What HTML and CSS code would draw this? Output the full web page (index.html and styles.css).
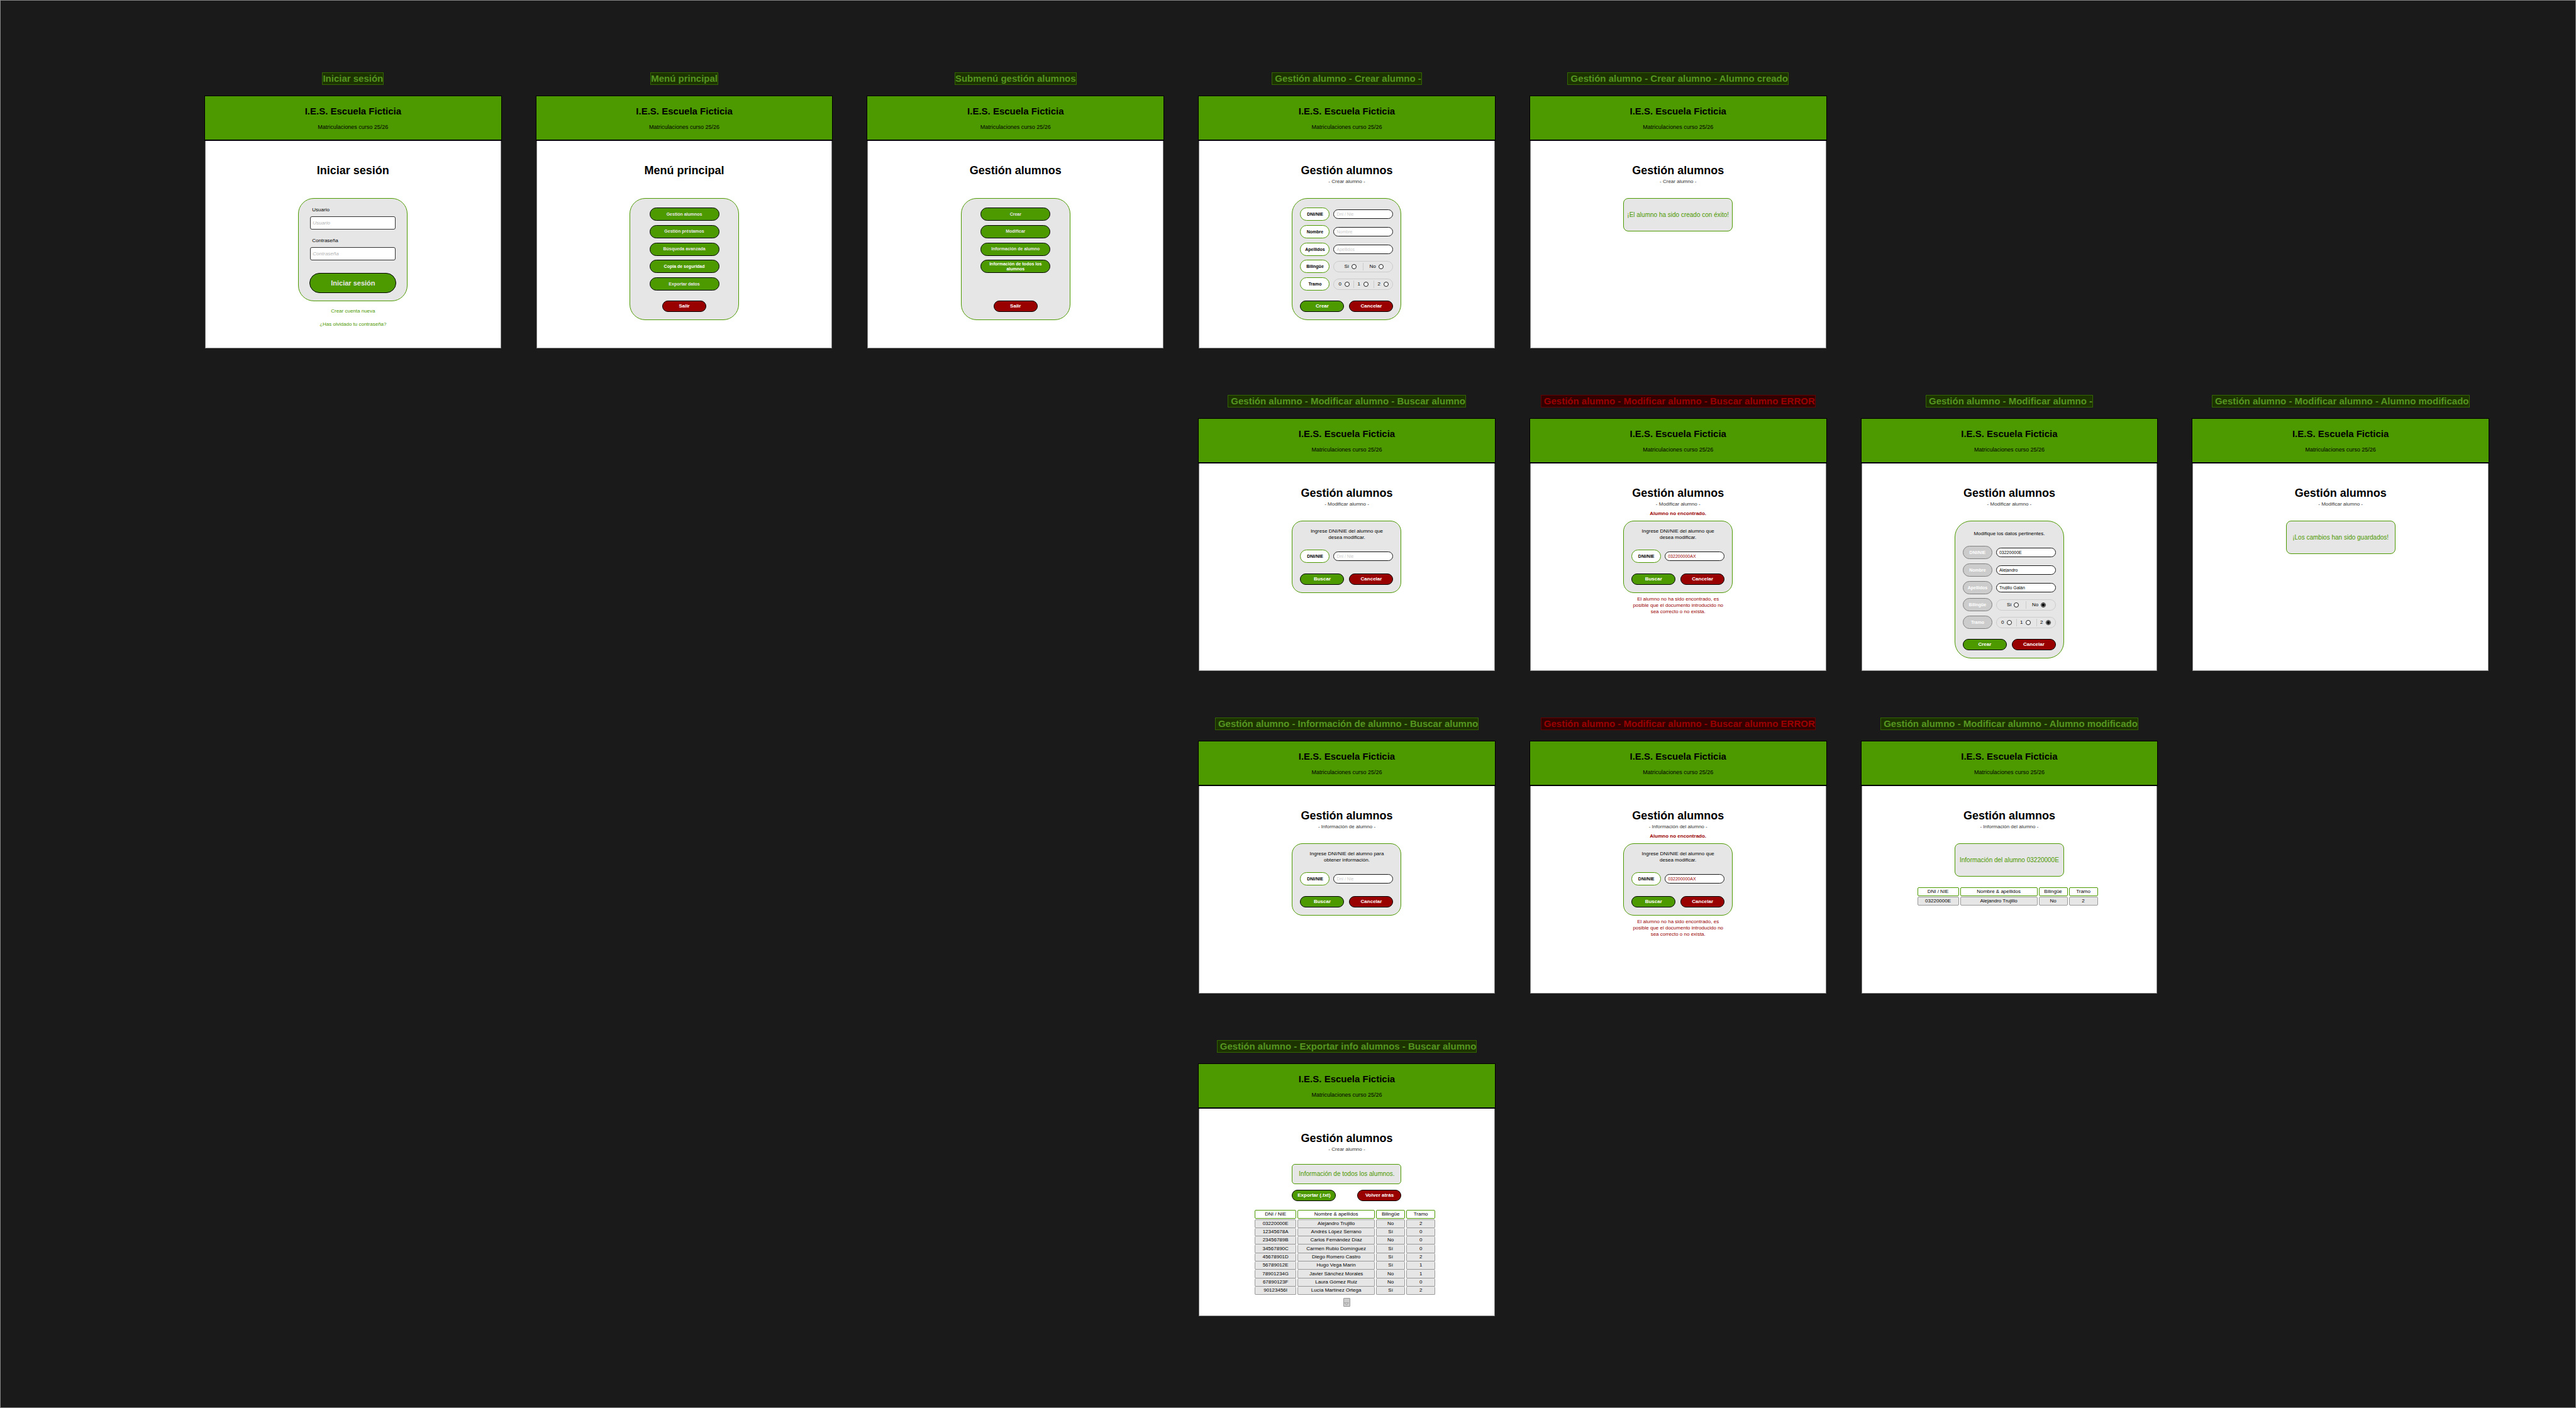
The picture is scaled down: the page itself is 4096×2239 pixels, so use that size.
FILE: index.html
```html
<!DOCTYPE html>
<html lang="es">
<head>
<meta charset="utf-8">
<title>I.E.S. Escuela Ficticia - Prototipo</title>
<link rel="stylesheet" href="styles.css">
</head>
<body>
<main class="board">

  <section class="flow">
    <article class="frame">
      <p class="tag">Iniciar sesión</p>
      <div class="screen">
        <header class="banner"><h1 class="school">I.E.S. Escuela Ficticia</h1><p class="course">Matriculaciones curso 25/26</p></header>
        <div class="content">
          <div class="head"><h2 class="title">Iniciar sesión</h2></div>
          <form class="panel panel-login">
            <label class="field-label" for="user">Usuario</label>
            <input class="field" id="user" type="text" placeholder="Usuario">
            <label class="field-label" for="pass">Contraseña</label>
            <input class="field" id="pass" type="password" placeholder="Contraseña">
            <button class="btn btn-large" type="button">Iniciar sesión</button>
          </form>
          <nav class="links">
            <a class="link" href="#">Crear cuenta nueva</a>
            <a class="link" href="#">¿Has olvidado tu contraseña?</a>
          </nav>
        </div>
      </div>
    </article>

    <article class="frame">
      <p class="tag">Menú principal</p>
      <div class="screen">
        <header class="banner"><h1 class="school">I.E.S. Escuela Ficticia</h1><p class="course">Matriculaciones curso 25/26</p></header>
        <div class="content">
          <div class="head"><h2 class="title">Menú principal</h2></div>
          <div class="panel panel-menu">
            <nav class="rows">
              <button class="btn btn-menu" type="button">Gestión alumnos</button>
              <button class="btn btn-menu" type="button">Gestión préstamos</button>
              <button class="btn btn-menu" type="button">Búsqueda avanzada</button>
              <button class="btn btn-menu btn-bright" type="button">Copia de seguridad</button>
              <button class="btn btn-menu" type="button">Exportar datos</button>
            </nav>
            <div class="actions"><button class="btn btn-red" type="button">Salir</button></div>
          </div>
        </div>
      </div>
    </article>

    <article class="frame">
      <p class="tag">Submenú gestión alumnos</p>
      <div class="screen">
        <header class="banner"><h1 class="school">I.E.S. Escuela Ficticia</h1><p class="course">Matriculaciones curso 25/26</p></header>
        <div class="content">
          <div class="head"><h2 class="title">Gestión alumnos</h2></div>
          <div class="panel panel-menu">
            <nav class="rows">
              <button class="btn btn-menu" type="button">Crear</button>
              <button class="btn btn-menu" type="button">Modificar</button>
              <button class="btn btn-menu" type="button">Información de alumno</button>
              <button class="btn btn-menu btn-bright" type="button">Información de todos los alumnos</button>
            </nav>
            <div class="actions"><button class="btn btn-red" type="button">Salir</button></div>
          </div>
        </div>
      </div>
    </article>

    <article class="frame">
      <p class="tag">&nbsp;Gestión alumno - Crear alumno -</p>
      <div class="screen">
        <header class="banner"><h1 class="school">I.E.S. Escuela Ficticia</h1><p class="course">Matriculaciones curso 25/26</p></header>
        <div class="content">
          <div class="head"><h2 class="title">Gestión alumnos</h2><p class="subtitle">- Crear alumno -</p></div>
          <form class="panel panel-menu">
            <div class="rows">
              <div class="row"><label class="pill" for="new-dni">DNI/NIE</label><input class="entry" id="new-dni" type="text" placeholder="Dni / Nie"></div>
              <div class="row"><label class="pill" for="new-name">Nombre</label><input class="entry" id="new-name" type="text" placeholder="Nombre"></div>
              <div class="row"><label class="pill" for="new-last">Apellidos</label><input class="entry" id="new-last" type="text" placeholder="Apellidos"></div>
              <div class="row"><span class="pill" id="new-bil">Bilingüe</span>
                <div class="choice choice-two" role="radiogroup" aria-labelledby="new-bil">
                  <label class="option">Sí<input class="radio" type="radio" name="new-bil"></label>
                  <label class="option">No<input class="radio" type="radio" name="new-bil"></label>
                </div>
              </div>
              <div class="row"><span class="pill" id="new-tramo">Tramo</span>
                <div class="choice choice-three" role="radiogroup" aria-labelledby="new-tramo">
                  <label class="option">0<input class="radio" type="radio" name="new-tramo"></label>
                  <label class="option">1<input class="radio" type="radio" name="new-tramo"></label>
                  <label class="option">2<input class="radio" type="radio" name="new-tramo"></label>
                </div>
              </div>
            </div>
            <div class="actions actions-pair"><button class="btn" type="button">Crear</button><button class="btn btn-red" type="button">Cancelar</button></div>
          </form>
        </div>
      </div>
    </article>

    <article class="frame">
      <p class="tag">&nbsp;Gestión alumno - Crear alumno - Alumno creado</p>
      <div class="screen">
        <header class="banner"><h1 class="school">I.E.S. Escuela Ficticia</h1><p class="course">Matriculaciones curso 25/26</p></header>
        <div class="content">
          <div class="head"><h2 class="title">Gestión alumnos</h2><p class="subtitle">- Crear alumno -</p></div>
          <p class="notice">¡El alumno ha sido creado con éxito!</p>
        </div>
      </div>
    </article>
  </section>

  <section class="flow flow-branch">
    <article class="frame">
      <p class="tag">&nbsp;Gestión alumno - Modificar alumno - Buscar alumno</p>
      <div class="screen">
        <header class="banner"><h1 class="school">I.E.S. Escuela Ficticia</h1><p class="course">Matriculaciones curso 25/26</p></header>
        <div class="content">
          <div class="head"><h2 class="title">Gestión alumnos</h2><p class="subtitle">- Modificar alumno -</p></div>
          <form class="panel panel-search">
            <p class="prompt">Ingrese DNI/NIE del alumno que desea modificar.</p>
            <div class="row"><label class="pill" for="mod-dni">DNI/NIE</label><input class="entry" id="mod-dni" type="text" placeholder="Dni / Nie"></div>
            <div class="actions actions-pair"><button class="btn" type="button">Buscar</button><button class="btn btn-red" type="button">Cancelar</button></div>
          </form>
        </div>
      </div>
    </article>

    <article class="frame">
      <p class="tag tag-error">&nbsp;Gestión alumno - Modificar alumno - Buscar alumno ERROR</p>
      <div class="screen">
        <header class="banner"><h1 class="school">I.E.S. Escuela Ficticia</h1><p class="course">Matriculaciones curso 25/26</p></header>
        <div class="content">
          <div class="head"><h2 class="title">Gestión alumnos</h2><p class="subtitle">- Modificar alumno -</p><p class="alert">Alumno no encontrado.</p></div>
          <form class="panel panel-search">
            <p class="prompt">Ingrese DNI/NIE del alumno que desea modificar.</p>
            <div class="row"><label class="pill" for="mod-dni-error">DNI/NIE</label><input class="entry entry-error" id="mod-dni-error" type="text" value="032200000AX"></div>
            <div class="actions actions-pair"><button class="btn" type="button">Buscar</button><button class="btn btn-red" type="button">Cancelar</button></div>
          </form>
          <p class="error-text">El alumno no ha sido encontrado, es posible que el documento introducido no sea correcto o no exista.</p>
        </div>
      </div>
    </article>

    <article class="frame">
      <p class="tag">&nbsp;Gestión alumno - Modificar alumno -</p>
      <div class="screen">
        <header class="banner"><h1 class="school">I.E.S. Escuela Ficticia</h1><p class="course">Matriculaciones curso 25/26</p></header>
        <div class="content">
          <div class="head"><h2 class="title">Gestión alumnos</h2><p class="subtitle">- Modificar alumno -</p></div>
          <form class="panel panel-edit">
            <p class="prompt">Modifique los datos pertinentes.</p>
            <div class="rows">
              <div class="row"><label class="pill pill-muted" for="edit-dni">DNI/NIE</label><input class="entry" id="edit-dni" type="text" value="03220000E"></div>
              <div class="row"><label class="pill pill-muted" for="edit-name">Nombre</label><input class="entry" id="edit-name" type="text" value="Alejandro"></div>
              <div class="row"><label class="pill pill-muted" for="edit-last">Apellidos</label><input class="entry" id="edit-last" type="text" value="Trujillo Galán"></div>
              <div class="row"><span class="pill pill-muted" id="edit-bil">Bilingüe</span>
                <div class="choice choice-two" role="radiogroup" aria-labelledby="edit-bil">
                  <label class="option">Sí<input class="radio" type="radio" name="edit-bil"></label>
                  <label class="option">No<input class="radio" type="radio" name="edit-bil" checked></label>
                </div>
              </div>
              <div class="row"><span class="pill pill-muted" id="edit-tramo">Tramo</span>
                <div class="choice choice-three" role="radiogroup" aria-labelledby="edit-tramo">
                  <label class="option">0<input class="radio" type="radio" name="edit-tramo"></label>
                  <label class="option">1<input class="radio" type="radio" name="edit-tramo"></label>
                  <label class="option">2<input class="radio" type="radio" name="edit-tramo" checked></label>
                </div>
              </div>
            </div>
            <div class="actions actions-pair"><button class="btn" type="button">Crear</button><button class="btn btn-red" type="button">Cancelar</button></div>
          </form>
        </div>
      </div>
    </article>

    <article class="frame">
      <p class="tag">&nbsp;Gestión alumno - Modificar alumno - Alumno modificado</p>
      <div class="screen">
        <header class="banner"><h1 class="school">I.E.S. Escuela Ficticia</h1><p class="course">Matriculaciones curso 25/26</p></header>
        <div class="content">
          <div class="head"><h2 class="title">Gestión alumnos</h2><p class="subtitle">- Modificar alumno -</p></div>
          <p class="notice">¡Los cambios han sido guardados!</p>
        </div>
      </div>
    </article>
  </section>

  <section class="flow flow-branch">
    <article class="frame">
      <p class="tag">&nbsp;Gestión alumno - Información de alumno - Buscar alumno</p>
      <div class="screen">
        <header class="banner"><h1 class="school">I.E.S. Escuela Ficticia</h1><p class="course">Matriculaciones curso 25/26</p></header>
        <div class="content">
          <div class="head"><h2 class="title">Gestión alumnos</h2><p class="subtitle">- Información de alumno -</p></div>
          <form class="panel panel-search">
            <p class="prompt">Ingrese DNI/NIE del alumno para obtener información.</p>
            <div class="row"><label class="pill" for="info-dni">DNI/NIE</label><input class="entry" id="info-dni" type="text" placeholder="Dni / Nie"></div>
            <div class="actions actions-pair"><button class="btn" type="button">Buscar</button><button class="btn btn-red" type="button">Cancelar</button></div>
          </form>
        </div>
      </div>
    </article>

    <article class="frame">
      <p class="tag tag-error">&nbsp;Gestión alumno - Modificar alumno - Buscar alumno ERROR</p>
      <div class="screen">
        <header class="banner"><h1 class="school">I.E.S. Escuela Ficticia</h1><p class="course">Matriculaciones curso 25/26</p></header>
        <div class="content">
          <div class="head"><h2 class="title">Gestión alumnos</h2><p class="subtitle">- Información del alumno -</p><p class="alert">Alumno no encontrado.</p></div>
          <form class="panel panel-search">
            <p class="prompt">Ingrese DNI/NIE del alumno que desea modificar.</p>
            <div class="row"><label class="pill" for="info-dni-error">DNI/NIE</label><input class="entry entry-error" id="info-dni-error" type="text" value="032200000AX"></div>
            <div class="actions actions-pair"><button class="btn" type="button">Buscar</button><button class="btn btn-red" type="button">Cancelar</button></div>
          </form>
          <p class="error-text">El alumno no ha sido encontrado, es posible que el documento introducido no sea correcto o no exista.</p>
        </div>
      </div>
    </article>

    <article class="frame">
      <p class="tag">&nbsp;Gestión alumno - Modificar alumno - Alumno modificado</p>
      <div class="screen">
        <header class="banner"><h1 class="school">I.E.S. Escuela Ficticia</h1><p class="course">Matriculaciones curso 25/26</p></header>
        <div class="content">
          <div class="head"><h2 class="title">Gestión alumnos</h2><p class="subtitle">- Información del alumno -</p></div>
          <p class="notice">Información del alumno 03220000E</p>
          <table class="roster roster-single">
            <thead><tr><th class="col-id">DNI / NIE</th><th class="col-name">Nombre &amp; apellidos</th><th class="col-short">Bilingüe</th><th class="col-short">Tramo</th></tr></thead>
            <tbody><tr><td>03220000E</td><td>Alejandro Trujillo</td><td>No</td><td>2</td></tr></tbody>
          </table>
        </div>
      </div>
    </article>
  </section>

  <section class="flow flow-branch">
    <article class="frame">
      <p class="tag">&nbsp;Gestión alumno - Exportar info alumnos - Buscar alumno</p>
      <div class="screen">
        <header class="banner"><h1 class="school">I.E.S. Escuela Ficticia</h1><p class="course">Matriculaciones curso 25/26</p></header>
        <div class="content">
          <div class="head head-tight"><h2 class="title">Gestión alumnos</h2><p class="subtitle">- Crear alumno -</p></div>
          <p class="notice notice-slim">Información de todos los alumnos.</p>
          <div class="toolbar"><button class="btn" type="button">Exportar (.txt)</button><button class="btn btn-red" type="button">Volver atrás</button></div>
          <table class="roster roster-list">
            <thead><tr><th class="col-id">DNI / NIE</th><th class="col-name">Nombre &amp; apellidos</th><th class="col-short">Bilingüe</th><th class="col-short">Tramo</th></tr></thead>
            <tbody>
              <tr><td>03220000E</td><td>Alejandro Trujillo</td><td>No</td><td>2</td></tr>
              <tr><td>12345678A</td><td>Andrés López Serrano</td><td>Sí</td><td>0</td></tr>
              <tr><td>23456789B</td><td>Carlos Fernández Díaz</td><td>No</td><td>0</td></tr>
              <tr><td>34567890C</td><td>Carmen Rubio Domínguez</td><td>Sí</td><td>0</td></tr>
              <tr><td>45678901D</td><td>Diego Romero Castro</td><td>Sí</td><td>2</td></tr>
              <tr><td>56789012E</td><td>Hugo Vega Marín</td><td>Sí</td><td>1</td></tr>
              <tr><td>78901234G</td><td>Javier Sánchez Morales</td><td>No</td><td>1</td></tr>
              <tr><td>67890123F</td><td>Laura Gómez Ruiz</td><td>No</td><td>0</td></tr>
              <tr><td>90123456I</td><td>Lucía Martínez Ortega</td><td>Sí</td><td>2</td></tr>
            </tbody>
          </table>
          <button class="more" type="button" aria-label="Ver más"><svg class="more-icon" viewBox="0 0 8 5"><path d="M0.7 0.6H7.3L4 4.3Z" fill="none" stroke="#999999" stroke-width="0.8"/></svg></button>
        </div>
      </div>
    </article>
  </section>

</main>
</body>
</html>
```
FILE: styles.css
```css
* { box-sizing: border-box; }

body {
  margin: 0;
  background: #1a1a1a;
  color: #000000;
  font-family: "Liberation Sans", Arial, sans-serif;
  font-size: 8px;
  line-height: 10px;
}

h1, h2, p { margin: 0; }

button, input { font-family: inherit; margin: 0; }

/* Board and flows */
.board {
  min-height: 100vh;
  padding: 114px 138px 74px 325px;
  border: 1px solid #888888;
  display: flex;
  flex-direction: column;
  gap: 74px;
}

.flow {
  display: grid;
  grid-template-columns: repeat(7, 1fr);
  column-gap: 56px;
}

.flow-branch > .frame:first-child { grid-column-start: 4; }

.frame {
  display: flex;
  flex-direction: column;
  align-items: center;
  gap: 17px;
  min-width: 0;
}

.tag {
  height: 20px;
  border: 1px solid #336600;
  background: #1c3300;
  color: #559520;
  font-size: 15px;
  font-weight: bold;
  line-height: 17px;
  white-space: nowrap;
}

.tag-error {
  border-color: #660000;
  background: #330000;
  color: #990000;
}

/* Screen */
.screen {
  width: 100%;
  background: #ffffff;
}

.banner {
  height: 72px;
  margin: 0 -1px;
  padding-top: 14px;
  border: 1px solid #000000;
  border-bottom-width: 2px;
  background: #4d9900;
  text-align: center;
}

.school {
  font-size: 15px;
  line-height: 20px;
}

.course {
  margin-top: 10px;
  font-size: 9px;
}

.content {
  min-height: 330px;
  padding-top: 37px;
  border: 1px solid #808080;
  border-top: 0;
  display: flex;
  flex-direction: column;
  align-items: center;
}

.head {
  min-height: 54px;
  text-align: center;
}

.head-tight { min-height: 51px; }

.title {
  font-size: 18px;
  line-height: 20px;
}

.subtitle {
  margin-top: 3px;
  color: #333333;
}

.alert {
  margin-top: 5px;
  color: #990000;
  font-weight: bold;
}

/* Panels */
.panel {
  width: 174px;
  border: 1px solid #4d9900;
  background: #e6e6e6;
}

.panel-login {
  padding: 13px 17px 12px;
  border-radius: 25px;
  display: flex;
  flex-direction: column;
}

.panel-menu {
  padding: 14px 12px 12px;
  border-radius: 25px;
}

.panel-search {
  padding: 11px 12px 12px;
  border-radius: 17px;
}

.panel-edit {
  padding: 15px 12px 12px;
  border-radius: 26px;
}

.prompt {
  margin-bottom: 14px;
  padding: 0 10px;
  text-align: center;
}

.panel-search .actions { margin-top: 17px; }

.field-label { padding-left: 4px; }

.field {
  height: 21px;
  margin: 5px 1px 13px;
  padding: 0 3px;
  border: 1px solid #333333;
  border-radius: 3px;
  background: #ffffff;
  font-size: 8px;
}

.field::placeholder {
  color: #b3b3b3;
  font-style: italic;
}

/* Buttons */
.btn {
  width: 70px;
  height: 18px;
  padding: 0;
  border: 1px solid #000000;
  border-radius: 9px;
  background: #4d9900;
  color: #ffffff;
  font-size: 8px;
  font-weight: bold;
  line-height: 10px;
}

.btn-red { background: #990000; }

.btn-large {
  width: 100%;
  height: 32px;
  margin-top: 7px;
  border-radius: 16px;
  color: #e6e6e6;
  font-size: 11px;
}

.btn-menu {
  width: 111px;
  height: 21px;
  padding: 0 8px;
  border-radius: 11px;
  color: #e6e6e6;
  font-size: 7px;
  line-height: 8px;
}

.btn-bright { color: #ffffff; }

.rows {
  height: 132px;
  display: grid;
  grid-template-rows: repeat(5, 21px);
  align-content: space-between;
  justify-content: center;
}

.actions {
  margin-top: 16px;
  display: flex;
  justify-content: center;
}

.actions-pair {
  justify-content: flex-start;
  gap: 8px;
}

/* Form rows */
.row {
  display: grid;
  grid-template-columns: 47px 95px;
  column-gap: 6px;
  align-items: center;
}

.pill {
  height: 21px;
  border: 1px solid #4d9900;
  border-radius: 11px;
  background: #ffffff;
  font-size: 7px;
  font-weight: bold;
  line-height: 19px;
  text-align: center;
}

.pill-muted {
  border-color: #808080;
  background: #cccccc;
  color: #ffffff;
}

.entry {
  width: 95px;
  height: 15px;
  padding: 0 4px;
  border: 1px solid #1a1a1a;
  border-radius: 8px;
  background: #ffffff;
  color: #000000;
  font-size: 7px;
}

.entry::placeholder { color: #cccccc; }
.entry-error { color: #990000; }

.choice {
  height: 18px;
  border: 1px solid #cccccc;
  border-radius: 9px;
  display: grid;
  align-items: center;
}

.choice-two { grid-template-columns: 46px 1fr; }
.choice-three { grid-template-columns: 31px 32px 1fr; }

.option {
  height: 12px;
  padding-left: 5px;
  display: flex;
  align-items: center;
  gap: 5px;
}

.option + .option { border-left: 1px solid #cccccc; }
.choice-three .option:first-child { padding-left: 7px; }
.choice-two .option { padding-left: 9px; gap: 4px; }
.choice-two .option:first-child { padding-left: 16px; }

.radio {
  appearance: none;
  width: 8px;
  height: 8px;
  border: 1px solid #1a1a1a;
  border-radius: 50%;
  background: #ffffff;
}

.radio:checked { background: radial-gradient(circle, #000000 2px, #ffffff 3px); }

/* Links and messages */
.links {
  margin-top: 11px;
  display: flex;
  flex-direction: column;
  align-items: center;
  gap: 11px;
}

.link {
  color: #4d9900;
  text-decoration: none;
}

.error-text {
  width: 156px;
  margin-top: 5px;
  color: #990000;
  text-align: center;
}

.notice {
  width: 174px;
  height: 53px;
  border: 1px solid #4d9900;
  border-radius: 8px;
  background: #e6e6e6;
  color: #4d9900;
  font-size: 10px;
  line-height: 51px;
  text-align: center;
  white-space: nowrap;
}

.notice-slim {
  height: 32px;
  border-radius: 5px;
  line-height: 30px;
}

.toolbar {
  width: 174px;
  margin-top: 9px;
  display: flex;
  justify-content: space-between;
}

/* Student tables */
.roster {
  align-self: flex-start;
  margin-left: 86px;
  border-collapse: separate;
  border-spacing: 2px 0;
  table-layout: fixed;
  text-align: center;
}

.roster-single { margin-top: 17px; }
.roster-list { margin-top: 14px; }

.roster tbody::before {
  content: "";
  display: block;
  height: 1px;
}

.roster th,
.roster td {
  padding: 0;
  border-radius: 2px;
}

.roster th {
  height: 14px;
  border: 1px solid #4d9900;
  background: #ffffff;
  font-weight: normal;
}

.roster td {
  height: 13px;
  border: 1px solid #999999;
  background: #e6e6e6;
}

.roster tr:nth-child(3n + 1) td { height: 14px; }
.roster tr + tr td { border-top: 0; }

.col-id { width: 66px; }
.col-name { width: 123px; }
.col-short { width: 46px; }

.more {
  width: 11px;
  height: 14px;
  margin-top: 5px;
  padding: 4px 0 0;
  border: 1px solid #999999;
  border-radius: 1px;
  background: #cccccc;
  display: flex;
  align-items: center;
  justify-content: center;
}

.more-icon {
  width: 8px;
  height: 5px;
}
```
